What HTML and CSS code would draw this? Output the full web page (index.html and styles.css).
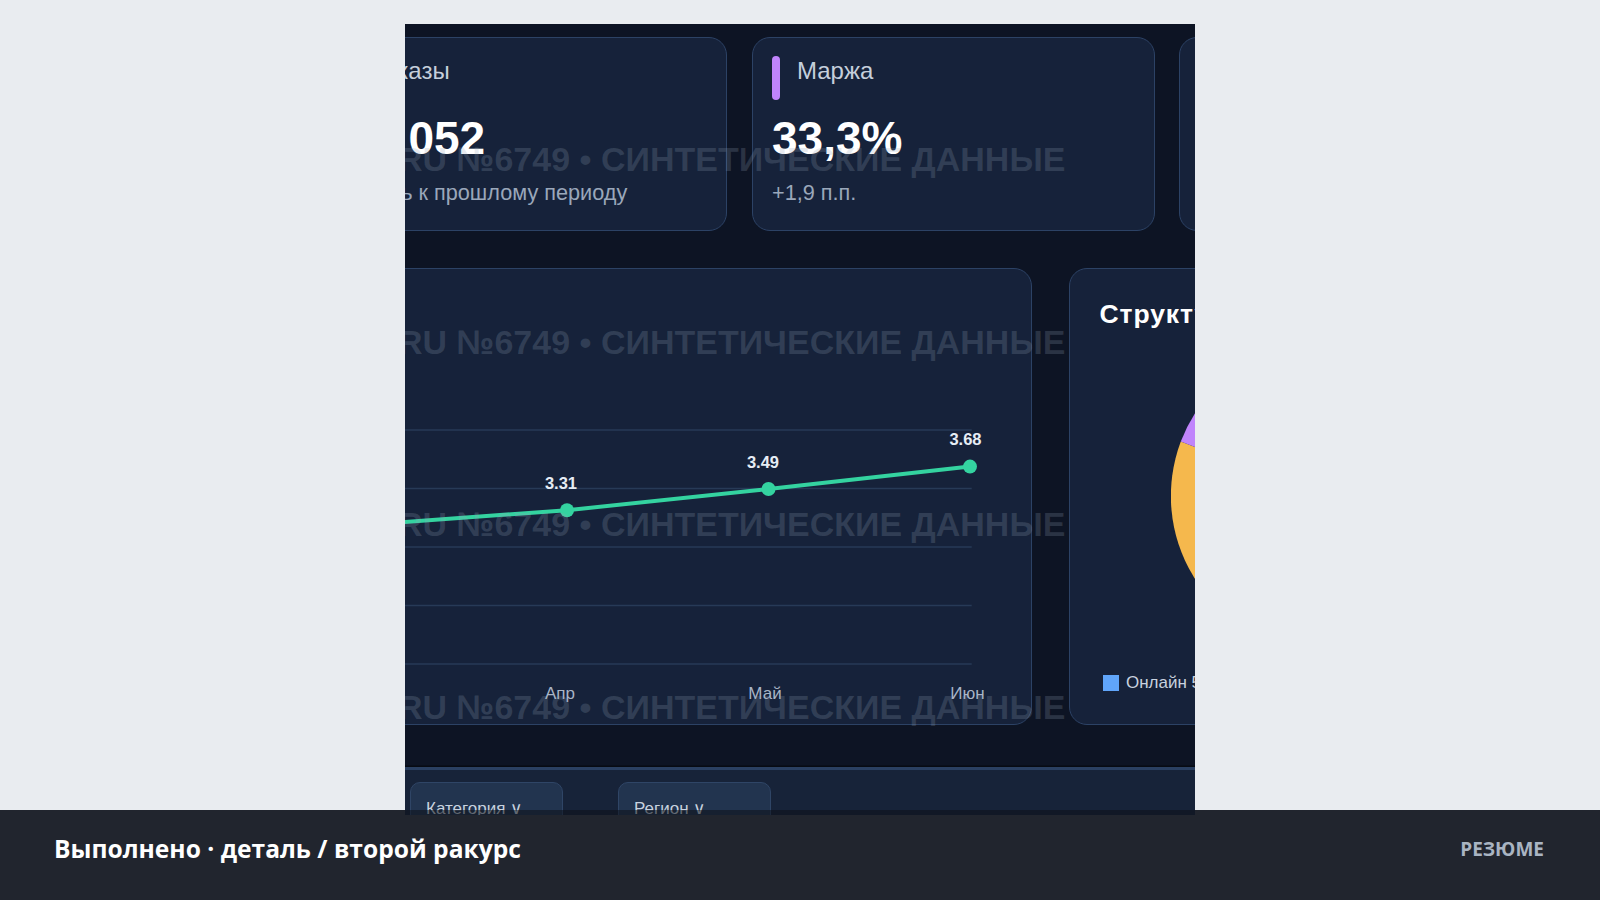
FILE: index.html
```html
<!DOCTYPE html>
<html lang="ru">
<head>
<meta charset="utf-8">
<title>Деталь / второй ракурс</title>
<link rel="stylesheet" href="styles.css">
</head>
<body>
<main class="stage">
  <section class="shot">
    <div class="dash">
      <div class="kpis">
        <article class="kpi">
          <div class="kpi-head"><span class="kpi-bar bar-green"></span><span class="kpi-label">Выручка</span></div>
          <div class="kpi-value">4,82 млн</div>
          <div class="kpi-sub">+6,2% к прошлому периоду</div>
        </article>
        <article class="kpi">
          <div class="kpi-head"><span class="kpi-bar bar-blue"></span><span class="kpi-label">Заказы</span></div>
          <div class="kpi-value">12 052</div>
          <div class="kpi-sub">В цель к прошлому периоду</div>
        </article>
        <article class="kpi">
          <div class="kpi-head"><span class="kpi-bar bar-purple"></span><span class="kpi-label">Маржа</span></div>
          <div class="kpi-value">33,3%</div>
          <div class="kpi-sub">+1,9 п.п.</div>
        </article>
        <article class="kpi">
          <div class="kpi-head"><span class="kpi-bar bar-orange"></span><span class="kpi-label">Средний чек</span></div>
          <div class="kpi-value">3,68 тыс.</div>
          <div class="kpi-sub">+5,4% к прошлому периоду</div>
        </article>
      </div>

      <div class="charts">
        <article class="card chart-card">
          <h2 class="card-title">Средний чек, тыс. ₽</h2>
          <svg class="line-chart" width="1072" height="370" viewBox="0 0 1072 370">
            <g class="grid">
              <line x1="0" y1="86" x2="1043.7" y2="86"/>
              <line x1="0" y1="144.5" x2="1043.7" y2="144.5"/>
              <line x1="0" y1="203" x2="1043.7" y2="203"/>
              <line x1="0" y1="261.5" x2="1043.7" y2="261.5"/>
              <line x1="0" y1="320" x2="1043.7" y2="320"/>
            </g>
            <polyline class="series" points="34.5,207.7 236,193.6 437.5,180.8 639,166.2 840.5,145 1042,122.6"/>
            <g class="dots">
              <circle cx="34.5" cy="207.7" r="7"/>
              <circle cx="236" cy="193.6" r="7"/>
              <circle cx="437.5" cy="180.8" r="7"/>
              <circle cx="639" cy="166.2" r="7"/>
              <circle cx="840.5" cy="145" r="7"/>
              <circle cx="1042" cy="122.6" r="7"/>
            </g>
            <g class="vals">
              <text x="28.5" y="186.2">2.96</text>
              <text x="230" y="172.1">3.08</text>
              <text x="431.5" y="159.3">3.19</text>
              <text x="633" y="144.7">3.31</text>
              <text x="835" y="123.5">3.49</text>
              <text x="1037.5" y="101.4">3.68</text>
            </g>
            <g class="months">
              <text x="27.5" y="355">Янв</text>
              <text x="229" y="355">Фев</text>
              <text x="430.5" y="355">Мар</text>
              <text x="632" y="355">Апр</text>
              <text x="837" y="355">Май</text>
              <text x="1039.5" y="355">Июн</text>
            </g>
          </svg>
        </article>

        <article class="card pie-card">
          <h2 class="card-title">Структура продаж</h2>
          <svg class="pie" width="308" height="308" viewBox="0 0 308 308">
            <path class="slice-blue" d="M154,154 L154,0 A154,154 0 1 1 134.7,306.8 Z"/>
            <path class="slice-orange" d="M154,154 L134.7,306.8 A154,154 0 0 1 9.8,99.6 Z"/>
            <path class="slice-purple" d="M154,154 L9.8,99.6 A154,154 0 0 1 154,0 Z"/>
          </svg>
          <ul class="legend">
            <li><span class="swatch sw-blue"></span>Онлайн 52%</li>
            <li><span class="swatch sw-orange"></span>Розница 29%</li>
            <li><span class="swatch sw-purple"></span>Партнёры 19%</li>
          </ul>
        </article>
      </div>

      <div class="filters">
        <button class="filter" type="button">Период ∨</button>
        <button class="filter" type="button">Канал ∨</button>
        <button class="filter" type="button">Категория ∨</button>
        <button class="filter" type="button">Регион ∨</button>
      </div>
    </div>

    <div class="watermark" aria-hidden="true">
      <p>RU №6749 • СИНТЕТИЧЕСКИЕ ДАННЫЕ</p>
      <p>RU №6749 • СИНТЕТИЧЕСКИЕ ДАННЫЕ</p>
      <p>RU №6749 • СИНТЕТИЧЕСКИЕ ДАННЫЕ</p>
      <p>RU №6749 • СИНТЕТИЧЕСКИЕ ДАННЫЕ</p>
      <p>RU №6749 • СИНТЕТИЧЕСКИЕ ДАННЫЕ</p>
    </div>
  </section>
</main>

<footer class="caption">
  <h1 class="caption-title">Выполнено · деталь / второй ракурс</h1>
  <span class="caption-action">РЕЗЮМЕ</span>
</footer>
</body>
</html>
```

FILE: styles.css
```css
* {
  box-sizing: border-box;
  margin: 0;
  padding: 0;
}

html,
body {
  width: 1600px;
  height: 900px;
  overflow: hidden;
}

body {
  background: #e9ecf0;
  font-family: "Liberation Sans", Arial, sans-serif;
}

.stage {
  height: 810px;
  padding-top: 24px;
}

.shot {
  position: relative;
  width: 790px;
  height: 791px;
  margin: 0 auto;
  background: #0d1424;
  overflow: hidden;
}

.shot::after {
  content: "";
  position: absolute;
  left: 0;
  right: 0;
  bottom: 0;
  height: 5px;
  background: rgba(12, 16, 24, 0.55);
}

.dash {
  width: 1685.5px;
  margin-left: -508.5px;
  padding-top: 12.7px;
}

/* KPI cards */
.kpis {
  display: grid;
  grid-template-columns: repeat(4, 403px);
  column-gap: 24.5px;
}

.kpi {
  height: 194px;
  background: #16223a;
  border: 1.5px solid #2c4265;
  border-radius: 18px;
  padding: 18.8px 20px 0 19.5px;
}

.kpi-head {
  display: flex;
  align-items: flex-start;
  gap: 17px;
  height: 44px;
}

.kpi-bar {
  width: 8px;
  height: 44px;
  border-radius: 4px;
  flex: none;
}

.bar-green { background: #34d3a0; }
.bar-blue { background: #60a5fa; }
.bar-purple { background: #c084fc; }
.bar-orange { background: #f5b84d; }

.kpi-label {
  margin-top: 1px;
  font-size: 24px;
  line-height: 28px;
  color: #c5cfdc;
}

.kpi-value {
  margin-top: 12px;
  font-size: 46px;
  line-height: 52px;
  font-weight: 700;
  color: #ffffff;
  white-space: nowrap;
}

.kpi-sub {
  margin-top: 16.4px;
  font-size: 21.7px;
  line-height: 24px;
  color: #9aa7ba;
  white-space: nowrap;
}

/* chart cards */
.charts {
  display: grid;
  grid-template-columns: 1135.2px 513px;
  column-gap: 37.3px;
  height: 456.7px;
  margin-top: 37.6px;
}

.card {
  background: #16223a;
  border: 1.5px solid #2c4265;
  border-radius: 18px;
  padding: 29.5px 29.5px 0;
}

.chart-card {
  padding-left: 30px;
  padding-right: 30px;
}

.card-title {
  font-size: 26.5px;
  line-height: 30px;
  font-weight: 700;
  letter-spacing: 0.9px;
  color: #ffffff;
  white-space: nowrap;
}

.line-chart {
  display: block;
  margin-top: 15.7px;
}

.grid line {
  stroke: #273a57;
  stroke-width: 1.5;
}

.series {
  fill: none;
  stroke: #34d3a0;
  stroke-width: 4;
  stroke-linejoin: round;
}

.dots circle {
  fill: #34d3a0;
}

.vals text {
  font-family: "Liberation Sans", Arial, sans-serif;
  font-size: 16.5px;
  font-weight: 700;
  fill: #e6edf5;
  text-anchor: middle;
}

.months text {
  font-family: "Liberation Sans", Arial, sans-serif;
  font-size: 17px;
  fill: #a9b5c7;
  text-anchor: middle;
}

.pie {
  display: block;
  margin: 13.7px auto 0;
}

.slice-blue { fill: #60a5fa; }
.slice-orange { fill: #f5b84d; }
.slice-purple { fill: #c084fc; }

.legend {
  list-style: none;
  display: flex;
  gap: 24px;
  margin-top: 24px;
  padding-left: 3.5px;
}

.legend li {
  display: flex;
  align-items: center;
  gap: 7px;
  font-size: 17px;
  line-height: 17px;
  color: #c8d2df;
  white-space: nowrap;
}

.swatch {
  width: 16px;
  height: 16px;
  flex: none;
}

.sw-blue { background: #60a5fa; }
.sw-orange { background: #f5b84d; }
.sw-purple { background: #c084fc; }

/* filter bar */
.filters {
  display: flex;
  gap: 55.5px;
  height: 200px;
  margin-top: 41.7px;
  padding: 12.3px 0 0 97.5px;
  background: #172339;
  border-top: 3px solid #2a4062;
  box-shadow: 0 -1.5px 0 #070b13;
}

.filter {
  flex: none;
  width: 152.5px;
  height: 54px;
  padding-left: 15px;
  background: #22344f;
  border: 1.5px solid #2f4566;
  border-radius: 10px;
  color: #c8d2df;
  font-family: "Liberation Sans", Arial, sans-serif;
  font-size: 17px;
  text-align: left;
  white-space: nowrap;
}

/* watermark overlay */
.watermark {
  position: absolute;
  left: -7px;
  top: 43.9px;
  pointer-events: none;
  font-size: 34px;
  line-height: 182.7px;
  font-weight: 700;
  color: rgba(148, 163, 184, 0.22);
  white-space: nowrap;
}

/* caption bar */
.caption {
  height: 90px;
  background: #21252e;
  display: flex;
  align-items: center;
  justify-content: space-between;
  padding: 0 56px 12px 54px;
  font-family: "Open Sans", "Noto Sans", sans-serif;
}

.caption-title {
  font-size: 24.6px;
  font-weight: 700;
  color: #ffffff;
  line-height: 34px;
}

.caption-action {
  font-size: 19px;
  font-weight: 700;
  color: #a9b4c2;
  line-height: 28px;
}
```
